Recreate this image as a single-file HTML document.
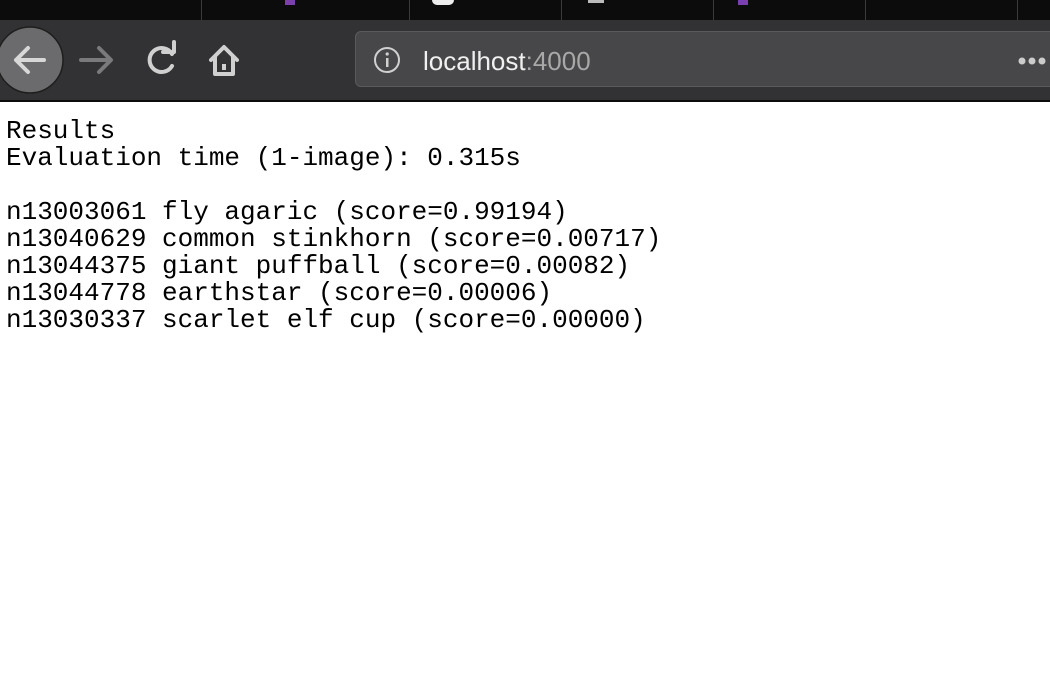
<!DOCTYPE html>
<html><head><meta charset="utf-8"><style>
html,body{margin:0;padding:0;width:1050px;height:688px;overflow:hidden;background:#fff}
.tabs{position:absolute;left:0;top:0;width:1050px;height:20px;background:#0c0c0c}
.sep{position:absolute;top:0;width:1px;height:20px;background:#3a3a3a}
.tb{position:absolute;left:0;top:20px;width:1050px;height:80px;background:#323234}
.line{position:absolute;left:0;top:100px;width:1050px;height:2px;background:#0c0c0c}
.url{position:absolute;left:355px;top:31px;width:720px;height:56px;background:#474749;border:1px solid #5a5a5c;border-radius:6px;box-sizing:border-box}
.urltext{position:absolute;left:423px;top:44px;font:26px "Liberation Sans",sans-serif;color:#f0f0f0;line-height:34px}
.urltext span{color:#a8a8a8}
pre{position:absolute;left:6px;top:118px;margin:0;font:26px/27px "Liberation Mono",monospace;color:#000}
</style></head><body>
<div class="tabs">
<div class="sep" style="left:201px"></div><div class="sep" style="left:409px"></div><div class="sep" style="left:561px"></div><div class="sep" style="left:713px"></div><div class="sep" style="left:865px"></div><div class="sep" style="left:1017px"></div>
<div style="position:absolute;left:285px;top:0;width:10px;height:5px;background:#7b3fb0"></div>
<div style="position:absolute;left:432px;top:0;width:22px;height:5px;border-radius:0 0 11px 11px;background:#eee"></div>
<div style="position:absolute;left:588px;top:0;width:16px;height:3px;background:#bbb"></div>
<div style="position:absolute;left:738px;top:0;width:10px;height:5px;background:#7b3fb0"></div>
</div>
<div class="tb"></div>
<svg style="position:absolute;left:0;top:20px" width="260" height="80">
<circle cx="30" cy="40" r="33" fill="#6b6b6d" stroke="#1e1e1e" stroke-width="1.5"/>
<path d="M44 40H16M28 28L16 40L28 52" stroke="#d8d8d8" stroke-width="4" fill="none" stroke-linecap="round" stroke-linejoin="round"/>
<path d="M81 40H110M99 28L111 40L99 52" stroke="#7a7a7c" stroke-width="4" fill="none" stroke-linecap="round" stroke-linejoin="round"/>
<path d="M172 34A12 12 0 1 0 172 46" stroke="#d0d0d0" stroke-width="4" fill="none" stroke-linecap="round"/>
<path d="M163 32H174V22" stroke="#d0d0d0" stroke-width="4" fill="none" stroke-linecap="round" stroke-linejoin="round"/>
<path d="M211 40L224 27L237 40M215 37V54H233V37" stroke="#d0d0d0" stroke-width="4" fill="none" stroke-linejoin="round" stroke-linecap="round"/>
<rect x="222" y="44" width="4" height="6" fill="#d0d0d0"/>
</svg>
<div class="line"></div>
<div class="url"></div>
<svg style="position:absolute;left:372px;top:46px" width="30" height="30"><circle cx="15" cy="14" r="12" stroke="#d0d0d0" stroke-width="2" fill="none"/><rect x="14" y="12" width="2.5" height="9" fill="#d0d0d0"/><circle cx="15.2" cy="8" r="1.6" fill="#d0d0d0"/></svg>
<div class="urltext">localhost<span>:4000</span></div>
<svg style="position:absolute;left:1015px;top:54px" width="35" height="14"><circle cx="7" cy="7" r="3.5" fill="#ccc"/><circle cx="17" cy="7" r="3.5" fill="#ccc"/><circle cx="27" cy="7" r="3.5" fill="#ccc"/></svg>
<pre>Results
Evaluation time (1-image): 0.315s

n13003061 fly agaric (score=0.99194)
n13040629 common stinkhorn (score=0.00717)
n13044375 giant puffball (score=0.00082)
n13044778 earthstar (score=0.00006)
n13030337 scarlet elf cup (score=0.00000)</pre>
</body></html>
